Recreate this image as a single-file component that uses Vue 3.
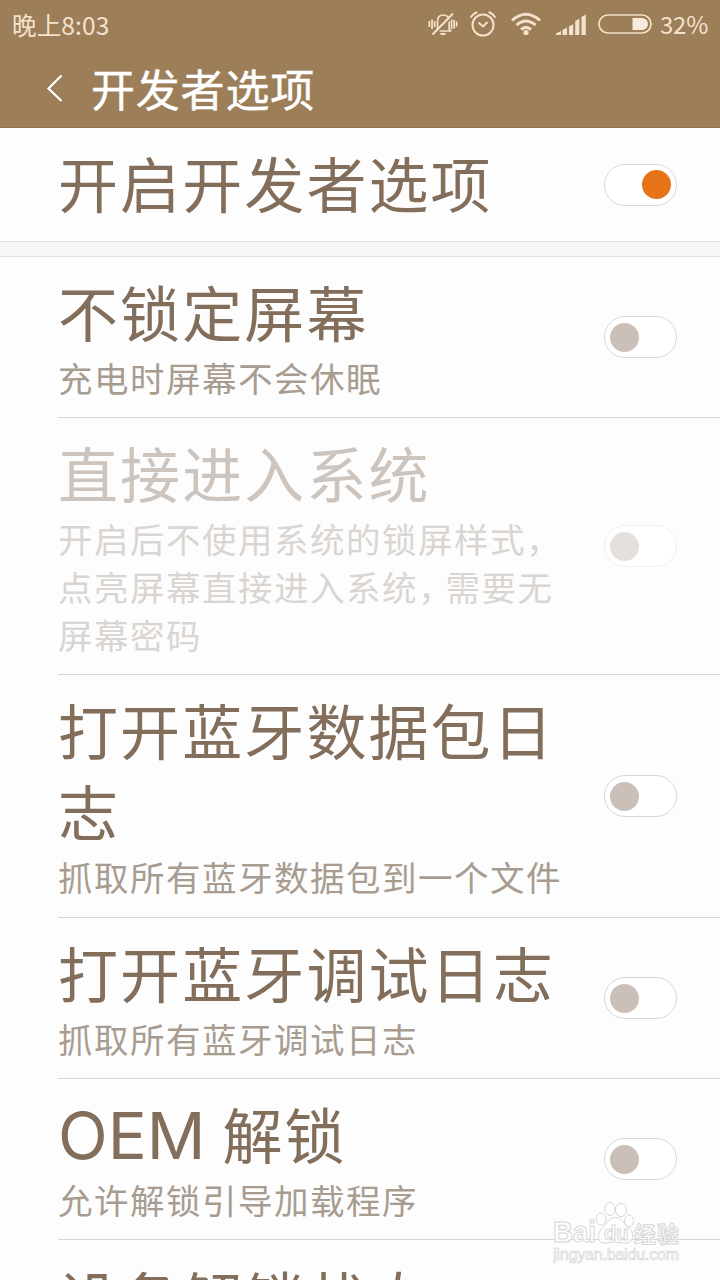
<script setup>
const rows = [
  { key: 'lock', title: ['不锁定屏幕'], sub: ['充电时屏幕不会休眠'] },
  {
    key: 'direct',
    title: ['直接进入系统'],
    sub: ['开启后不使用系统的锁屏样式，', '点亮屏幕直接进入系统，需要无', '屏幕密码'],
    disabled: true
  },
  { key: 'hci', title: ['打开蓝牙数据包日', '志'], sub: ['抓取所有蓝牙数据包到一个文件'] },
  { key: 'bt', title: ['打开蓝牙调试日志'], sub: ['抓取所有蓝牙调试日志'] },
  { key: 'oem', latin: 'OEM', title: ['解锁'], sub: ['允许解锁引导加载程序'] },
  { key: 'state', title: ['设备解锁状态'], sub: [], link: true }
]
const split = (line) => line.split(/(，)/).filter(Boolean)
</script>

<template>
  <div class="screen">
    <header class="header">
      <div class="status">
        <span class="time">晚上8:03</span>
        <div class="icons">
          <svg class="ic-bell" width="30" height="26" viewBox="0 0 30 26" fill="none" stroke="#f4e2cc" stroke-width="1.7">
            <path d="M7.500 20h16M9.500 19.500V10.500c0-4 2.200-6.500 5.800-6.500s5.800 2.500 5.800 6.500V18l1.600 2" />
            <path d="M12.500 23h5" stroke-width="2" />
            <path d="M6.500 24L26 4" stroke="#9c7e59" stroke-width="2" />
            <path d="M4.500 23.500L25 2.500" stroke-width="2" />
            <path d="M1.300 10v6M4 8.500v9.500M6.600 10v6M23.600 8.500v9.500M26.200 9v8.500M28.700 10.500v5" />
          </svg>
          <svg class="ic-clock" width="28" height="26" viewBox="0 0 28 26" fill="none" stroke="#f4e2cc" stroke-width="2">
            <circle cx="14" cy="14" r="10.500" />
            <path d="M9.500 11.500l4.500 4 4.500-4.500M1.500 6.500Q4 2.500 8.300 1M26.500 6.500Q24 2.500 19.700 1" />
          </svg>
          <svg class="ic-wifi" width="32" height="24" viewBox="0 0 32 24" fill="none" stroke="#f4e2cc" stroke-width="3">
            <path d="M2 8.500Q16-4 30 8.500M6.500 13.200Q16 4.800 25.500 13.200M11 17.500Q16 13.300 21 17.500" />
            <circle cx="16" cy="20.500" r="2.600" fill="#f4e2cc" stroke="none" />
          </svg>
          <svg class="ic-signal" width="31" height="22" viewBox="0 0 31 22" fill="#f4e2cc">
            <path d="M0 21v-1.500L5 17v4zM6.500 21v-5l4.500-2.500V21zM13 21v-8.500l4.200-2.300V21zM19.200 21V7l4.200-2.300V21zM25.500 21V3l4.300-2.500V21z" />
          </svg>
          <svg class="ic-battery" width="54" height="20" viewBox="0 0 54 20" fill="none">
            <rect x="1" y="1" width="52" height="18" rx="9" stroke="#f4e2cc" stroke-width="1.700" />
            <path d="M34.500 4H44a6 6 0 0 1 0 12h-9.500z" fill="#f7ebdc" />
          </svg>
          <span class="pct">32%</span>
        </div>
      </div>
      <div class="bar">
        <svg class="back" width="18" height="30" viewBox="0 0 18 30" fill="none" stroke="#fff" stroke-width="2.200">
          <path d="M15.500 2.500L2.500 15.500 15.500 28" />
        </svg>
        <h1 class="heading">开发者选项</h1>
      </div>
    </header>

    <section class="row master">
      <div class="text"><div class="title">开启开发者选项</div></div>
      <div class="switch on"><i class="knob"></i></div>
    </section>
    <div class="gap"></div>

    <main class="list">
      <section v-for="r in rows" :key="r.key" class="row item" :class="[r.key, { disabled: r.disabled }]">
        <div class="text">
          <div v-for="t in r.title" :key="t" class="title"><span v-if="r.latin" class="latin">{{ r.latin }}</span>{{ t }}</div>
          <div v-for="s in r.sub" :key="s" class="sub"><span v-for="(p, i) in split(s)" :key="i" :class="{ comma: p === '，' }">{{ p }}</span></div>
        </div>
        <div v-if="!r.link" class="switch"><i class="knob"></i></div>
      </section>
    </main>

    <svg class="watermark" width="132" height="66" viewBox="0 0 132 66">
      <g fill="#fff" fill-opacity=".75" stroke="#d6d6d6" stroke-width="1">
        <text x="0" y="40" class="wm-latin" textLength="43" lengthAdjust="spacingAndGlyphs">Bai</text>
        <ellipse cx="48" cy="17" rx="5" ry="6" />
        <ellipse cx="57" cy="7" rx="5" ry="6.500" />
        <ellipse cx="68" cy="8" rx="5.500" ry="6.500" />
        <ellipse cx="76" cy="19" rx="4.500" ry="6" />
        <path d="M62 15.500c7 0 9 7 13 10 8 6 5 16-3 15.500-4 0-6-1-10-1s-6 1-10 1c-8 .5-9-9.500-2-15.500 4-3 5-10 12-10z" />
        <text x="51" y="38" class="wm-du">du</text>
        <text x="81" y="40" class="wm-cjk" textLength="45">经验</text>
        <text x="0" y="58" class="wm-url" stroke-width=".7" textLength="126">jingyan.baidu.com</text>
      </g>
    </svg>
  </div>
</template>

<style>
html, body { margin: 0; overflow: hidden; background: #fdfdfd; }
</style>

<style scoped>
.screen {
  position: relative;
  width: 720px;
  height: 1280px;
  overflow: hidden;
  background: #fdfdfd;
  font-family: "Noto Sans CJK SC", "Liberation Sans", sans-serif;
  font-weight: 400;
}
.header { height: 128px; box-sizing: border-box; background: #9c7e59; border-bottom: 1px solid #8d7150; }
.status {
  height: 48px;
  display: flex;
  justify-content: space-between;
  padding: 0 12px;
  color: #f4e2cc;
}
.time { font-size: 24.500px; line-height: 49px; letter-spacing: .15px; white-space: nowrap; }
.icons { display: flex; align-items: center; }
.ic-clock { margin-left: 11px; }
.ic-wifi { margin-left: 13px; }
.ic-signal { margin-left: 14px; margin-top: 1px; }
.ic-battery { margin-left: 11px; }
.pct { margin-left: 8px; width: 48px; font-size: 24px; line-height: 46px; letter-spacing: -.2px; white-space: nowrap; }
.bar { height: 80px; display: flex; align-items: center; padding-left: 46px; }
.heading { margin: 0 0 0 27px; font-size: 44px; line-height: 80px; letter-spacing: .8px; font-weight: 400; color: #fff; -webkit-text-stroke: .4px #fff; }
.row {
  display: flex;
  align-items: center;
  justify-content: space-between;
  box-sizing: border-box;
  padding-right: 43px;
}
.master { height: 113px; padding-left: 58px; }
.master .text { padding-bottom: 6px; }
.gap {
  height: 16px;
  box-sizing: border-box;
  background: #f6f5f8;
  border-top: 1px solid #dddce0;
  border-bottom: 1px solid #e2e1e5;
}
.item { margin-left: 58px; height: 161px; border-bottom: 1px solid #d6d5d8; }
.item.direct { height: 257px; }
.item.hci { height: 243px; }
.item.state { align-items: flex-start; padding-top: 16px; }
.text { white-space: nowrap; padding-bottom: 4px; }
.title { font-size: 60px; line-height: 81px; letter-spacing: 2.100px; color: #836e5b; }
.title + .sub { margin-top: 2px; }
.latin { font-family: Inter, sans-serif; font-size: 65px; line-height: 1; letter-spacing: 0; margin-right: 17px; }
.sub { font-size: 34.500px; line-height: 48px; letter-spacing: 1.500px; color: #a89c91; }
.comma { letter-spacing: -7px; }
.disabled .title { color: #cdc5bd; }
.disabled .sub { color: #dad5d1; }
.switch {
  flex: none;
  display: flex;
  align-items: center;
  box-sizing: border-box;
  width: 73px;
  height: 42px;
  padding: 0 5px;
  border: 1px solid #d9d6da;
  border-radius: 21px;
  background: #fff;
}
.knob { width: 29px; height: 29px; border-radius: 50%; background: #cac0b9; }
.on { justify-content: flex-end; }
.on .knob { background: #e67318; }
.disabled .switch { border-color: #f2f0f1; }
.disabled .knob { background: #e4e0dd; }
.watermark { position: absolute; left: 553px; top: 1202px; }
.wm-latin { font: bold 29px "Liberation Sans", sans-serif; }
.wm-du { font: bold 20px "Liberation Sans", sans-serif; }
.wm-cjk { font: bold 22px "Noto Sans CJK SC", sans-serif; }
.wm-url { font: 16px "Liberation Sans", sans-serif; }
</style>
